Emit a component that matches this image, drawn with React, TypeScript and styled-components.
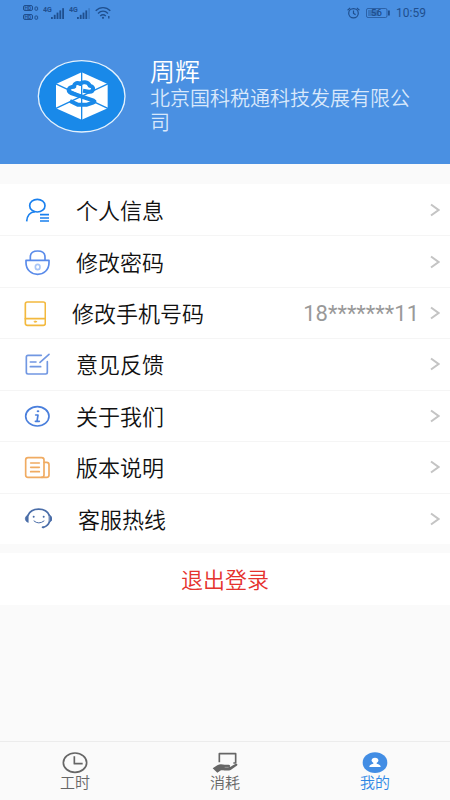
import React from 'react';
import styled, { createGlobalStyle } from 'styled-components';

const GlobalStyle = createGlobalStyle`
  *, *::before, *::after { box-sizing: border-box; }
  body {
    margin: 0;
    background: #fafafa;
    font-family: Roboto, "Noto Sans CJK SC", sans-serif;
    color: #1c1c1c;
  }
`;

const ink = '#1f4f8e';

const Page = styled.div`
  display: flex;
  flex-direction: column;
  min-height: 100vh;
`;

const Header = styled.header`
  background: #4a90e2;
  padding-bottom: 29px;
`;

const StatusBar = styled.div`
  display: flex;
  align-items: center;
  justify-content: space-between;
  height: 26px;
  padding: 0 24px 0 23px;
  color: ${ink};
  font-size: 12px;
`;

const StatusGroup = styled.div<{ $gap: number }>`
  display: flex;
  align-items: center;
  gap: ${({ $gap }) => $gap}px;
`;

const Profile = styled.section`
  display: flex;
  align-items: center;
  gap: 24px;
  padding: 32px 30px 0 37px;
`;

const LogoSvg = styled.svg`
  flex: none;
  width: 89px;
  height: 75px;
`;

const ProfileText = styled.div`
  flex: 1;
`;

const UserName = styled.h1`
  margin: 0;
  padding-top: 1px;
  font-size: 25px;
  line-height: 28px;
  font-weight: 350;
  color: #fff;
`;

const Company = styled.p`
  margin: 0;
  font-size: 20px;
  line-height: 24px;
  font-weight: 350;
  color: #d9e8fb;
`;

const Menu = styled.ul`
  display: grid;
  grid-auto-rows: 1fr;
  min-height: 360px;
  margin: 20px 0 0;
  padding: 0;
  list-style: none;
  background: #fff;
`;

const MenuItem = styled.li`
  display: flex;
  & + & { border-top: 1px solid #f5f5f5; }
`;

const MenuButton = styled.button`
  flex: 1;
  display: flex;
  align-items: center;
  padding: 2px 10px 0 24px;
  border: 0;
  background: none;
  font: inherit;
  font-size: 22px;
  line-height: 32px;
  color: inherit;
  text-align: left;
  cursor: pointer;
`;

const MenuIcon = styled.svg`
  flex: none;
  height: 26px;
  margin-right: 26px;
  fill: none;
  stroke-width: 5;
  stroke-linecap: round;
  stroke-linejoin: round;
`;

const MenuLabel = styled.span`
  flex: 1;
  padding-top: 2px;
  font-weight: 350;
  color: #111;
`;

const MenuValue = styled.span`
  margin-right: 11px;
  color: #999;
`;

const Chevron = styled.svg`
  flex: none;
  width: 10px;
  height: 14px;
  margin-bottom: 2px;
  fill: none;
  stroke: #c4c4c4;
  stroke-width: 2;
`;

const Logout = styled.button`
  margin: 9px 0 24px;
  height: 52px;
  padding: 4px 0 0;
  border: 0;
  background: #fff;
  font: inherit;
  font-size: 22px;
  line-height: 32px;
  font-weight: 350;
  color: #e5322d;
  cursor: pointer;
`;

const TabBar = styled.nav`
  display: grid;
  grid-template-columns: repeat(3, 1fr);
  margin-top: auto;
  border-top: 1px solid #ececec;
`;

const Tab = styled.a<{ $active?: boolean }>`
  display: flex;
  flex-direction: column;
  align-items: center;
  padding: 9px 0 9px;
  font-size: 15px;
  line-height: 16px;
  font-weight: 350;
  text-decoration: none;
  color: ${({ $active }) => ($active ? '#2f88e5' : '#666')};
`;

const TabIcon = styled.svg`
  width: 26px;
  height: 24px;
  fill: none;
  stroke-linejoin: round;
`;

const HdBadges = () => (
  <svg width="16" height="18" viewBox="0 0 16 18" aria-hidden="true">
    {[0, 9].map((y) => (
      <g key={y}>
        <rect x="0.5" y={y + 1.5} width="9" height="5" rx="1.5" fill="none" stroke={ink} />
        <text x="1.6" y={y + 6} fontSize="5" fontWeight="700" fill={ink}>HD</text>
        <rect x="12" y={y + 3} width="2.6" height="3.2" rx="0.6" fill="none" stroke={ink} />
      </g>
    ))}
  </svg>
);

const Signal = ({ bars }: { bars: number }) => (
  <svg width="22" height="16" viewBox="0 0 22 16" aria-hidden="true">
    <text x="0" y="7" fontSize="7" fontWeight="700" fill={ink}>4G</text>
    {[0, 1, 2, 3, 4].map((i) => (
      <rect
        key={i}
        x={8 + i * 2.8}
        y={12 - i * 2.2}
        width="1.8"
        height={2 + i * 2.2}
        fill={ink}
        opacity={i < bars ? 1 : 0.3}
      />
    ))}
  </svg>
);

const Wifi = () => (
  <svg width="16" height="14" viewBox="0 0 16 14" fill="none" stroke={ink} strokeWidth="1.4" aria-hidden="true">
    <path d="M0.7 4.8C5 0.6 11 0.6 15.3 4.8M3 7.4C6 4.6 10 4.6 13 7.4M5.2 9.9C7 8.3 9 8.3 10.8 9.9" />
    <circle cx="8" cy="11.8" r="1.1" fill={ink} stroke="none" />
    <path d="M13.8 10v2.4" />
  </svg>
);

const Alarm = () => (
  <svg width="13" height="12" viewBox="0 0 13 12" fill="none" stroke={ink} strokeWidth="1.2" aria-hidden="true">
    <ellipse cx="6.5" cy="6.3" rx="4.8" ry="4.6" />
    <path d="M6.5 3.6V6.5L8.6 7.6M0.6 3.2L3.2 0.9M12.4 3.2L9.8 0.9" />
  </svg>
);

const Battery = () => (
  <svg width="24" height="10" viewBox="0 0 24 10" aria-hidden="true">
    <rect x="0.5" y="0.5" width="20.5" height="9" rx="1.5" fill="none" stroke={ink} strokeOpacity="0.7" />
    <rect x="2" y="2" width="11" height="6" fill={ink} opacity="0.4" />
    <text x="5" y="8.4" fontSize="9.5" fontWeight="500" fill={ink}>56</text>
    <rect x="22" y="2.5" width="1.8" height="5" fill={ink} />
  </svg>
);

const Logo = () => (
  <LogoSvg viewBox="50 30 267 225" role="img" aria-label="国科税通">
    <ellipse cx="184" cy="142" rx="130" ry="107" fill="#1989e9" stroke="#e3f1fd" strokeWidth="4" />
    <path d="M184 70L262 105V178L184 212L107 178V105Z" fill="#fff" />
    <path d="M184 68V214M105 104L264 179M264 104L105 179" stroke="#1989e9" strokeWidth="4" />
    <path
      d="M188 125L205 128C220 130 224 112 208 110C204 96 184 98 180 105C168 98 160 106 162 113C143 113 141 126 152 132L220 155Q226 158 218 161L200 167H172L149 156"
      fill="none"
      stroke="#1989e9"
      strokeWidth="12"
      strokeLinejoin="round"
    />
  </LogoSvg>
);

type Item = { label: string; width: number; color: string; value?: string; art: React.ReactNode };

const items: Item[] = [
  {
    label: '个人信息',
    width: 26,
    color: '#1a80ee',
    art: (
      <>
        <ellipse cx="40" cy="23" rx="23" ry="19" />
        <path d="M8 70C9 54 18 42 33 41M48 50H75M48 60H75M48 69H75" strokeLinecap="butt" />
      </>
    ),
  },
  {
    label: '修改密码',
    width: 26,
    color: '#5a8bea',
    art: (
      <>
        <path d="M19 30V21C19 8 28 3 41 3S63 8 63 21V30" />
        <path d="M6 31H75V38C75 60 59 73 41 73S6 60 6 38Z" />
        <ellipse cx="41" cy="51" rx="7" ry="8" stroke="#a9c6f7" />
      </>
    ),
  },
  {
    label: '修改手机号码',
    width: 22,
    color: '#f3b93e',
    value: '18*******11',
    art: (
      <>
        <rect x="4" y="3" width="60" height="70" rx="6" />
        <path d="M4 53H64" />
        <ellipse cx="34" cy="62" rx="4" ry="2" fill="#f3b93e" strokeWidth="2" />
      </>
    ),
  },
  {
    label: '意见反馈',
    width: 26,
    color: '#7197e2',
    art: <path d="M52 10H12Q7 10 7 15V61Q7 66 12 66H65Q70 66 70 61V29M75 7L48 31M19 30H36M19 44H50" />,
  },
  {
    label: '关于我们',
    width: 26,
    color: '#4a7fdc',
    art: (
      <>
        <ellipse cx="40" cy="37" rx="35" ry="29" />
        <ellipse cx="42" cy="22" rx="4" ry="3" fill="#4a7fdc" stroke="none" />
        <path d="M35 33H42L39 52M34 52H46" />
      </>
    ),
  },
  {
    label: '版本说明',
    width: 26,
    color: '#f0ab62',
    art: (
      <>
        <rect x="5" y="8" width="55" height="59" rx="7" />
        <path d="M60 22H68Q75 22 75 29V60Q75 67 68 67H53M20 24H46M20 37H46M20 50H46" />
      </>
    ),
  },
  {
    label: '客服热线',
    width: 28,
    color: '#4a6da8',
    art: (
      <>
        <path d="M12 25C22 0 66 0 76 25" />
        <path d="M12 24C1 28 1 42 12 46ZM76 24C87 28 87 42 76 46Z" fill="#4a6da8" strokeWidth="2" />
        <path d="M76 45C73 54 67 58 59 61" />
        <path d="M30 42Q44 54 60 42" strokeWidth="3" />
        <ellipse cx="29" cy="29" rx="3" ry="3" fill="#4a6da8" stroke="none" />
        <ellipse cx="59" cy="29" rx="3" ry="3" fill="#4a6da8" stroke="none" />
        <ellipse cx="57" cy="61" rx="4" ry="3" fill="#4a6da8" stroke="none" />
      </>
    ),
  },
];

export default function App() {
  return (
    <Page>
      <GlobalStyle />
      <Header>
        <StatusBar>
          <StatusGroup $gap={4}>
            <HdBadges />
            <Signal bars={5} />
            <Signal bars={4} />
            <Wifi />
          </StatusGroup>
          <StatusGroup $gap={6}>
            <Alarm />
            <Battery />
            <time>10:59</time>
          </StatusGroup>
        </StatusBar>
        <Profile>
          <Logo />
          <ProfileText>
            <UserName>周辉</UserName>
            <Company>北京国科税通科技发展有限公司</Company>
          </ProfileText>
        </Profile>
      </Header>

      <Menu>
        {items.map(({ label, width, color, value, art }) => (
          <MenuItem key={label}>
            <MenuButton type="button">
              <MenuIcon width={width} viewBox={`0 0 ${width * 3} 78`} stroke={color} aria-hidden="true">
                {art}
              </MenuIcon>
              <MenuLabel>{label}</MenuLabel>
              {value && <MenuValue>{value}</MenuValue>}
              <Chevron viewBox="0 0 10 14" aria-hidden="true">
                <path d="M1 1.500L8.500 7L1 12.500" />
              </Chevron>
            </MenuButton>
          </MenuItem>
        ))}
      </Menu>

      <Logout type="button">退出登录</Logout>

      <TabBar>
        <Tab href="#hours">
          <TabIcon viewBox="0 0 78 72" stroke="#666" strokeWidth="5" aria-hidden="true">
            <ellipse cx="39" cy="35" rx="35" ry="29" />
            <path d="M37 16V38H62" />
          </TabIcon>
          工时
        </Tab>
        <Tab href="#usage">
          <TabIcon viewBox="0 0 78 72" stroke="#666" strokeWidth="5" aria-hidden="true">
            <path d="M22 34V8H71V36H64" />
            <path
              d="M2 52L16 43C24 38 32 41 38 41H50C57 42 55 48 50 49C58 47 66 40 72 38C78 38 77 43 72 46L56 57C48 61 34 57 27 58L16 65Z"
              fill="#666"
              stroke="none"
            />
            <path d="M38 49H50" stroke="#fafafa" strokeWidth="1" />
          </TabIcon>
          消耗
        </Tab>
        <Tab href="#mine" $active aria-current="page">
          <TabIcon viewBox="0 0 78 72" aria-hidden="true">
            <ellipse cx="39" cy="35" rx="37" ry="31" fill="#428de4" />
            <ellipse cx="39" cy="28" rx="10" ry="8" fill="#fff" />
            <path d="M34 33H44V38C52 40 56 42 56 48H22C22 42 26 40 34 38Z" fill="#fff" />
          </TabIcon>
          我的
        </Tab>
      </TabBar>
    </Page>
  );
}
